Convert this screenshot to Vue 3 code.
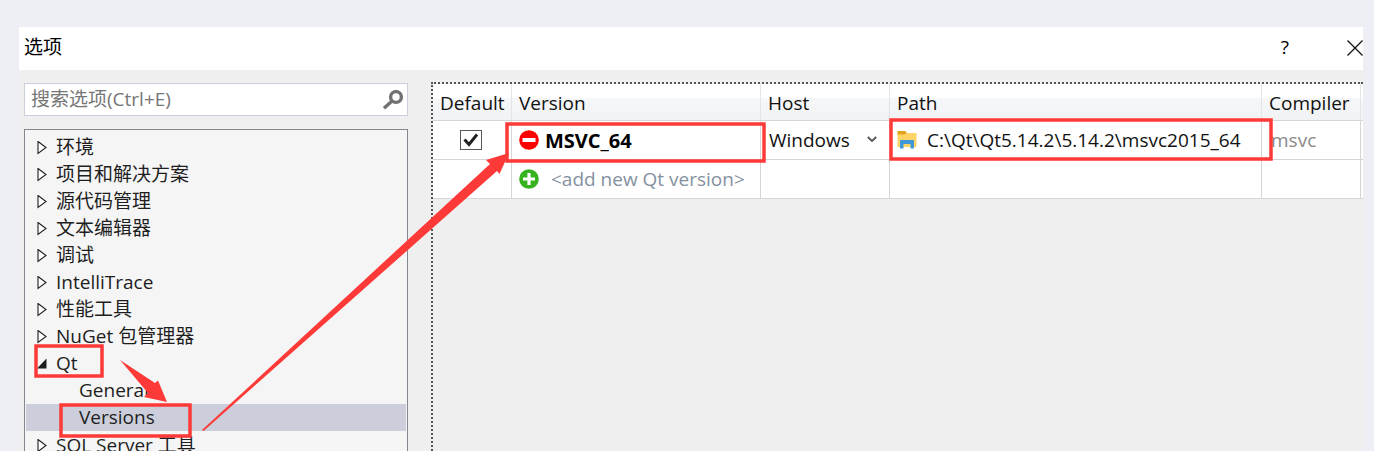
<script setup>
import { ref } from 'vue'

const query = ref('')
const isDefault = ref(true)
const host = ref('Windows')
const columns = ['Default', 'Version', 'Host', 'Path', 'Compiler']
const tree = [
  { label: '环境' },
  { label: '项目和解决方案' },
  { label: '源代码管理' },
  { label: '文本编辑器' },
  { label: '调试' },
  { label: 'IntelliTrace' },
  { label: '性能工具' },
  { label: 'NuGet 包管理器' },
  { label: 'Qt', children: ['General', 'Versions'] },
  { label: 'SQL Server 工具' }
]
const selected = ref('Versions')
</script>

<template>
  <div class="page">
    <section class="dialog" aria-label="选项">
      <header class="titlebar">
        <h1>选项</h1>
        <button class="win help" type="button" aria-label="帮助">?</button>
        <button class="win close" type="button" aria-label="关闭">
          <svg width="16" height="16" viewBox="0 0 16 16"><path d="M.5.5l15 15M15.5.5l-15 15" /></svg>
        </button>
      </header>

      <div class="body">
        <aside class="sidebar">
          <label class="search">
            <input v-model="query" type="text" placeholder="搜索选项(Ctrl+E)" aria-label="搜索选项" />
            <svg width="22" height="20" viewBox="0 0 22 20">
              <circle cx="14" cy="7" r="5.400" />
              <path d="M10 11L2 18.300" />
            </svg>
          </label>

          <ul class="tree">
            <li v-for="node in tree" :key="node.label">
              <button type="button" class="node">
                <svg width="10" height="14" viewBox="0 0 10 14">
                  <path v-if="node.children" class="open" d="M9.500 1.500V11.500H0z" />
                  <path v-else class="closed" d="M1 .5L9 6.500L1 12.500z" />
                </svg>
                <span>{{ node.label }}</span>
              </button>
              <ul v-if="node.children" class="children">
                <li v-for="child in node.children" :key="child">
                  <button
                    type="button"
                    class="node child"
                    :class="{ selected: selected === child }"
                    @click="selected = child"
                  >
                    {{ child }}
                  </button>
                </li>
              </ul>
            </li>
          </ul>
        </aside>

        <main class="panel">
          <table>
            <colgroup>
              <col class="c-default" />
              <col class="c-version" />
              <col class="c-host" />
              <col />
              <col class="c-compiler" />
              <col class="c-rest" />
            </colgroup>
            <thead>
              <tr>
                <th v-for="name in columns" :key="name" scope="col">{{ name }}</th>
                <td></td>
              </tr>
            </thead>
            <tbody>
              <tr>
                <td>
                  <label class="check">
                    <input v-model="isDefault" type="checkbox" aria-label="Default" />
                    <svg v-if="isDefault" width="16" height="14" viewBox="0 0 16 14">
                      <path d="M1.500 6.500L6 11.500L14 1.500" />
                    </svg>
                  </label>
                </td>
                <td>
                  <div class="cell">
                    <button type="button" class="icon" aria-label="Remove">
                      <svg width="20" height="20" viewBox="0 0 20 20">
                        <circle cx="10" cy="10" r="9.800" fill="#fd0202" />
                        <rect x="3.500" y="8" width="13" height="4" rx=".5" fill="#fff" />
                      </svg>
                    </button>
                    <strong>MSVC_64</strong>
                  </div>
                </td>
                <td>
                  <div class="host">
                    <select v-model="host" aria-label="Host">
                      <option>Windows</option>
                    </select>
                    <svg width="10" height="8" viewBox="0 0 10 8"><path d="M.8 1L5 5L9.200 1" /></svg>
                  </div>
                </td>
                <td>
                  <div class="cell path">
                    <button type="button" class="icon" aria-label="Browse">
                      <svg width="20" height="20" viewBox="0 0 20 20">
                        <path d="M1 1h7l1.500 1.500V6H.5V1.500z" fill="#e2a21a" />
                        <path d="M.5 4.500H8L9.500 3h9.500q.5 0 .5.500V17H.5z" fill="#fdd465" />
                        <path d="M3 18.500V11q0-1 1-1h12q1 0 1 1v7.500h-3.500V14h-7v4.500z" fill="#3e98d8" />
                      </svg>
                    </button>
                    <span>C:\Qt\Qt5.14.2\5.14.2\msvc2015_64</span>
                  </div>
                </td>
                <td class="muted">msvc</td>
                <td></td>
              </tr>
              <tr>
                <td></td>
                <td>
                  <div class="cell add">
                    <button type="button" class="icon" aria-label="Add">
                      <svg width="20" height="20" viewBox="0 0 20 20">
                        <circle cx="10" cy="10" r="9.800" fill="#35b21d" />
                        <path d="M10 4v12M4 10h12" stroke="#fff" stroke-width="3.200" />
                      </svg>
                    </button>
                    <span>&lt;add new Qt version&gt;</span>
                  </div>
                </td>
                <td></td>
                <td></td>
                <td></td>
                <td></td>
              </tr>
            </tbody>
          </table>
        </main>
      </div>
    </section>

    <svg class="marks" aria-hidden="true">
      <g fill="none" stroke="#fd3a37" stroke-width="3.500">
        <rect x="36" y="346" width="66" height="30" />
        <rect x="61" y="405" width="129" height="31" />
        <rect x="507" y="124" width="257" height="37" />
        <rect x="891" y="120" width="380" height="39" />
      </g>
      <g fill="#fd3a37">
        <path d="M120 360L155 383L158 380.500L167 402L144 397L148 393z" />
        <path d="M202 430L490 164L486 160L509 153L499.500 174L497 171L203.500 431z" />
      </g>
    </svg>
  </div>
</template>

<style>
html,
body {
  margin: 0;
  overflow: hidden;
}
</style>

<style scoped>
.page {
  position: relative;
  box-sizing: border-box;
  height: 100vh;
  padding: 27px 11px 0 19px;
  overflow: hidden;
  background: #eeeff4;
  color: #1e1e1e;
  font: 19px/27px "Open Sans", "Noto Sans CJK SC", sans-serif;
}
button,
input,
select {
  margin: 0;
  padding: 0;
  border: 0;
  background: none;
  color: inherit;
  font: inherit;
}
svg {
  display: block;
  flex: none;
}
.dialog {
  display: flex;
  flex-direction: column;
  height: 100%;
  overflow: hidden;
  background: #efefef;
}
.titlebar {
  display: flex;
  flex: none;
  align-items: center;
  box-sizing: border-box;
  height: 43px;
  padding: 0 0 2px 5px;
  background: #fff;
  color: #000;
}
h1 {
  flex: 1;
  margin: 0;
  font-size: 19px;
  font-weight: 400;
}
.help {
  margin-right: 58px;
}
.close path {
  stroke: #111;
  stroke-width: 1.3;
}
.body {
  display: flex;
  flex: 1;
  min-height: 0;
}
.sidebar {
  display: flex;
  flex: none;
  flex-direction: column;
  gap: 13px;
  width: 384px;
  padding: 13px 23px 0 5px;
}
.search {
  display: flex;
  flex: none;
  align-items: center;
  box-sizing: border-box;
  height: 33px;
  padding: 0 3px 0 6px;
  border: 1px solid #cccedb;
  background: #fff;
}
.search input {
  flex: 1;
  min-width: 0;
  outline: 0;
}
.search input::placeholder {
  color: #767676;
  opacity: 1;
}
.search svg {
  fill: none;
  stroke: #717171;
  stroke-width: 3.4;
}
ul {
  margin: 0;
  padding: 0;
  list-style: none;
}
.tree {
  flex: 1;
  min-height: 0;
  padding: 4px 1px 0;
  border: 1px solid #828790;
  border-bottom: 0;
  background: #f5f5f5;
}
.node {
  display: flex;
  align-items: center;
  gap: 9px;
  width: 100%;
  height: 27px;
  padding-left: 11px;
  text-align: left;
  white-space: nowrap;
}
.children {
  margin-bottom: 1px;
}
.child {
  padding-left: 53px;
}
.selected {
  background: #cccedb;
}
.open {
  fill: #1e1e1e;
}
.closed {
  fill: #fff;
  stroke: #1e1e1e;
  stroke-width: 1.1;
}
.panel {
  flex: 1;
  min-width: 0;
  margin-top: 12px;
  border-top: 2px dotted #555;
  border-left: 2px dotted #555;
}
table {
  width: 100%;
  table-layout: fixed;
  border-spacing: 0;
  background: #fff;
  color: #111;
}
.c-default {
  width: 79px;
}
.c-version {
  width: 249px;
}
.c-host {
  width: 129px;
}
.c-compiler {
  width: 99px;
}
.c-rest {
  width: 2px;
}
th,
td {
  box-sizing: border-box;
  height: 39px;
  padding: 0 0 0 7px;
  border-right: 1px solid #d5d5d5;
  border-bottom: 1px solid #d5d5d5;
  text-align: left;
  font-weight: 400;
  white-space: nowrap;
}
td:last-child {
  padding: 0;
  border-right: 0;
}
thead th,
thead td {
  height: 37px;
  border-right-color: #e3e4e6;
  background: linear-gradient(#fff 40%, #f6f7f9 40%, #f1f2f4);
}
thead th {
  padding-top: 2px;
}
.check {
  display: grid;
  place-items: center;
  box-sizing: border-box;
  width: 22px;
  height: 20px;
  margin-left: 20px;
  border: 1px solid #555;
  background: #fff;
}
.check input,
.check svg {
  grid-area: 1 / 1;
}
.check input {
  width: 100%;
  height: 100%;
  appearance: none;
}
.check svg {
  pointer-events: none;
}
.check path {
  fill: none;
  stroke: #222;
  stroke-width: 3;
}
.cell {
  display: flex;
  align-items: center;
  gap: 6px;
}
.icon {
  display: block;
}
strong {
  color: #000;
  font-size: 20px;
}
.add {
  gap: 12px;
  color: #8491a0;
}
.path {
  gap: 10px;
}
.host {
  display: flex;
  align-items: center;
  padding: 0 12px 0 1px;
}
.host select {
  flex: 1;
  min-width: 0;
  appearance: none;
}
.host path {
  fill: none;
  stroke: #555;
  stroke-width: 1.8;
}
.muted {
  padding-left: 9px;
  color: #8a8a8a;
}
.marks {
  position: absolute;
  inset: 0;
  width: 100%;
  height: 100%;
  pointer-events: none;
}
</style>
